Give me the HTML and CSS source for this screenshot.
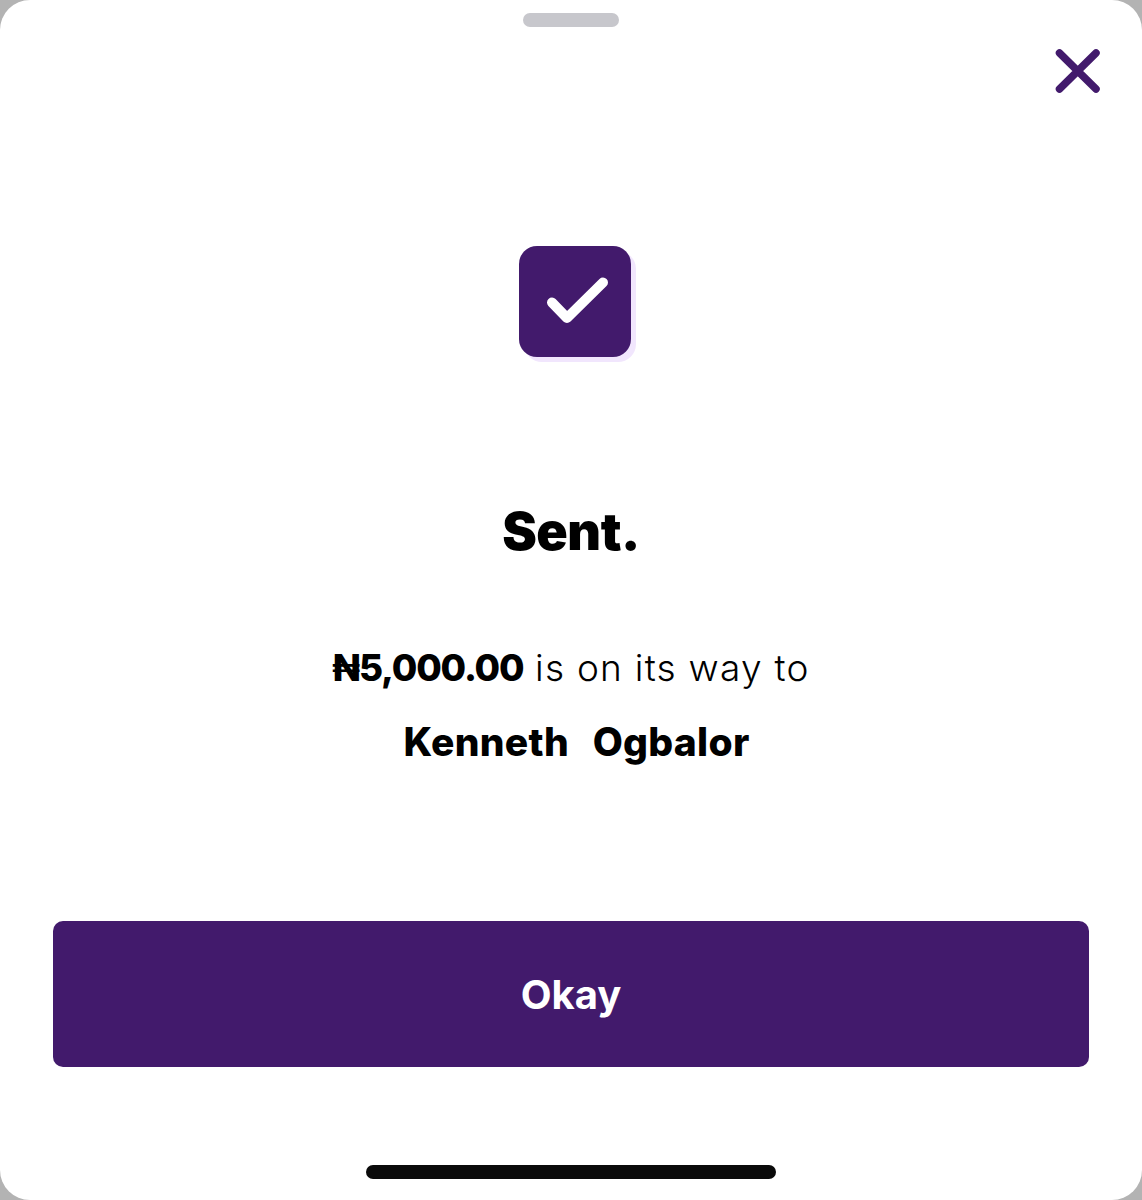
FILE: index.html
```html
<!DOCTYPE html>
<html lang="en">
<head>
  <meta charset="UTF-8">
  <meta name="viewport" content="width=device-width, initial-scale=1.0">
  <title>Sent</title>
  <link rel="stylesheet" href="styles.css">
</head>
<body>
  <div class="sheet">
    <div class="handle"></div>
    <div class="close-row">
      <svg class="close" width="46" height="46" viewBox="0 0 46 46" fill="none">
        <path d="M4.5 5L41 41M41 5L4.5 41" stroke="#421a6c" stroke-width="7.5" stroke-linecap="round"/>
      </svg>
    </div>
    <div class="check-wrap">
      <div class="check">
        <svg width="66" height="50" viewBox="0 0 66 50" fill="none">
          <path d="M10 25.5L25 41L61 5.5" stroke="#fff" stroke-width="10" stroke-linecap="round" stroke-linejoin="round"/>
        </svg>
      </div>
    </div>
    <h1 class="title">Sent.</h1>
    <p class="line"><b>₦5,000.00</b> is on its way to</p>
    <p class="name">Kenneth&nbsp; Ogbalor</p>
    <button class="okay">Okay</button>
    <div class="home-bar"></div>
  </div>
</body>
</html>
```

FILE: styles.css
```css
html, body {
  margin: 0;
  background-color: #b3b3b3;
}
.sheet {
  width: 1142px;
  height: 1200px;
  box-sizing: border-box;
  padding-top: 13px;
  display: flex;
  flex-direction: column;
  align-items: center;
  background-color: #fff;
  border-radius: 30px;
  font-family: "Inter", "Liberation Sans", sans-serif;
  color: #000;
}
.handle {
  width: 96px;
  height: 14px;
  border-radius: 7px;
  background-color: #c7c7cc;
}
.close-row {
  width: 100%;
  box-sizing: border-box;
  display: flex;
  justify-content: flex-end;
  padding: 21px 41px 0 0;
}
.close {
  display: block;
}
.check-wrap {
  margin-top: 152px;
  padding-left: 7px;
}
.check {
  width: 112px;
  height: 111px;
  display: flex;
  align-items: center;
  justify-content: center;
  background-color: #421a6c;
  border-radius: 18px;
  box-shadow: 5px 5px 0 #f1e6fd;
}
.title {
  margin: 139px 0 0;
  font-size: 52px;
  line-height: 72px;
  font-weight: 900;
  letter-spacing: -0.5px;
}
.line {
  margin: 75px 0 0;
  font-size: 37px;
  line-height: 50px;
  font-weight: 300;
  letter-spacing: 1.25px;
}
.line b {
  font-weight: 800;
  letter-spacing: -1.2px;
}
.name {
  margin: 24px 0 0 11px;
  font-size: 39px;
  line-height: 50px;
  font-weight: 800;
  letter-spacing: 0.3px;
  word-spacing: 3px;
}
.okay {
  width: 1036px;
  height: 146px;
  margin-top: 154px;
  border: none;
  border-radius: 10px;
  background-color: #421a6c;
  color: #fff;
  font-family: inherit;
  font-size: 40px;
  font-weight: 700;
}
.home-bar {
  width: 410px;
  height: 14px;
  margin-top: 98px;
  border-radius: 7px;
  background-color: #0a0a0a;
}
```
